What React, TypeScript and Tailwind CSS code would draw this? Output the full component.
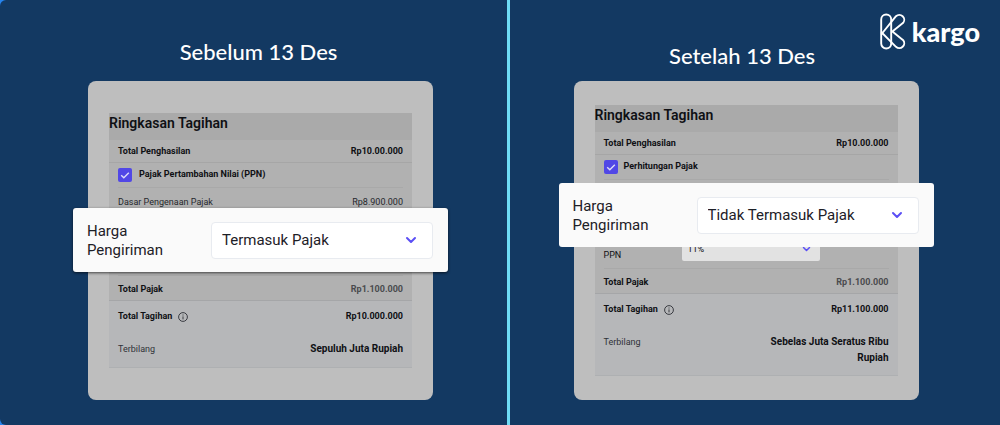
import React from "react";

function Chevron({ className }: { className: string }) {
  return (
    <svg viewBox="0 0 12 8" fill="none" stroke="#5b4ff5" strokeWidth="2" strokeLinecap="round" strokeLinejoin="round" className={className} aria-hidden="true">
      <path d="M2 2l4 4 4-4" />
    </svg>
  );
}

function InfoIcon() {
  return (
    <svg viewBox="0 0 10 10" fill="none" stroke="#1c1e24" strokeWidth="0.8" className="size-[10px]" aria-hidden="true">
      <circle cx="5" cy="5" r="4.4" />
      <path d="M5 4.4v3M5 2.5v1" />
    </svg>
  );
}

function KargoLogo() {
  return (
    <a href="#" aria-label="kargo" className="absolute top-[13px] right-5 flex items-center gap-[6px] font-[Lato,sans-serif] text-white">
      <svg viewBox="0 0 26 37" fill="none" stroke="currentColor" strokeWidth="1.9" strokeLinejoin="round" className="h-[37px] w-[26px]" aria-hidden="true">
        <rect x="1.2" y="1.5" width="10" height="34" rx="5" />
        <path d="M1.2 21.5 L16 3.2 A4.9 4.9 0 0 1 23.2 9.8 L12.4 18.5 L23.2 27.2 A4.9 4.9 0 0 1 16 33.8 L1.2 19" />
      </svg>
      <span className="text-[27px] leading-9 font-black">kargo</span>
    </a>
  );
}

function Row({ label, value, className, valueClass = "" }: { label: React.ReactNode; value: string; className: string; valueClass?: string }) {
  return (
    <div className={`flex justify-between ${className}`}>
      <dt className="flex items-center gap-[6px]">{label}</dt>
      <dd className={`text-right ${valueClass}`}>{value}</dd>
    </div>
  );
}

function TaxCheckbox({ id, label, className }: { id: string; label: string; className: string }) {
  return (
    <div className={`flex items-center font-bold ${className}`}>
      <span className="grid">
        <input id={id} type="checkbox" defaultChecked className="col-start-1 row-start-1 size-[14px] appearance-none rounded-xs bg-[#5147e6]" />
        <svg viewBox="0 0 14 14" fill="none" stroke="#dedcf8" strokeWidth="1.4" className="pointer-events-none col-start-1 row-start-1 size-[14px]" aria-hidden="true">
          <path d="M3.2 7.2l2.6 2.5 5-5" />
        </svg>
      </span>
      <label htmlFor={id}>{label}</label>
    </div>
  );
}

function PriceCallout({ id, value, options, className }: { id: string; value: string; options: string[]; className: string }) {
  return (
    <div className={`relative z-10 flex h-16 items-center justify-between rounded-[3px] bg-[#fafafa] pr-[15px] pl-[14px] text-[15px] text-[#1d2027] ${className}`}>
      <label htmlFor={id} className="w-[90px] pt-px leading-[19px]">
        Harga Pengiriman
      </label>
      <div className="grid w-[222px] items-center">
        <select id={id} defaultValue={value} className="col-start-1 row-start-1 h-[37px] w-full appearance-none rounded-sm border border-[#e8ebf0] bg-white px-[10px]">
          {options.map((option) => (
            <option key={option}>{option}</option>
          ))}
        </select>
        <Chevron className="pointer-events-none col-start-1 row-start-1 mr-4 h-[8px] w-3 justify-self-end" />
      </div>
    </div>
  );
}

function Totals({ total, words, className }: { total: string; words: string; className: string }) {
  return (
    <>
      <Row label="Total Pajak" value="Rp1.100.000" className="mx-[9px] h-[25px] items-center border-t border-[#a9a9a9] pt-[3px] font-bold" valueClass="text-[#4a4b4e]" />
      <div className={`border-y border-t-[#a5a6a8] border-b-[#aeb0b2] bg-[#b6b7b9] px-[9px] ${className}`}>
        <Row
          label={
            <>
              Total Tagihan <InfoIcon />
            </>
          }
          value={total}
          className="h-[31px] items-center pt-px font-bold"
        />
        <Row
          label={<span className="text-[#303238]">Terbilang</span>}
          value={words}
          className="items-start pt-[9px] leading-4"
          valueClass="w-[130px] text-[10px] font-bold"
        />
      </div>
    </>
  );
}

function Sheet({ children, className }: { children: React.ReactNode; className: string }) {
  return (
    <section className={`min-h-[319px] w-[345px] rounded-lg bg-[#bebebe] px-[21px] text-[9px] text-[#0f1014] ${className}`}>
      <div className="bg-[#b1b1b1]">
        <h3 className="h-[27px] bg-[#aaaaaa] text-sm leading-[21px] font-semibold">Ringkasan Tagihan</h3>
        <dl>
          <Row label="Total Penghasilan" value="Rp10.00.000" className="h-[23px] items-center border-b border-[#a6a6a6] px-[9px] pt-0.5 font-bold" />
          {children}
        </dl>
      </div>
    </section>
  );
}

function BeforePanel() {
  return (
    <section className="flex flex-col items-center pl-[14px]">
      <h2 className="pt-[38px] pr-1 font-[Lato,sans-serif] text-[22px] leading-7 font-medium text-white">Sebelum 13 Des</h2>
      <Sheet className="mt-[15px] pt-8">
        <TaxCheckbox id="ppn-before" label="Pajak Pertambahan Nilai (PPN)" className="mx-[9px] h-[25px] gap-[7px] border-b border-[#a9a9a9]" />
        <Row label="Dasar Pengenaan Pajak" value="Rp8.900.000" className="h-5 items-end px-[9px] leading-3 text-[#26282d]" />
        <PriceCallout id="price-before" value="Termasuk Pajak" options={["Termasuk Pajak", "Tidak Termasuk Pajak"]} className="-mx-9 mb-[3px] shadow-[0_1px_3px_rgba(0,0,0,0.65)]" />
        <Totals total="Rp10.000.000" words="Sepuluh Juta Rupiah" className="h-[68px]" />
      </Sheet>
    </section>
  );
}

function AfterPanel() {
  return (
    <section className="flex flex-col items-center pr-[18px]">
      <h2 className="pt-[42px] pr-2 font-[Lato,sans-serif] text-[22px] leading-7 font-medium text-white">Setelah 13 Des</h2>
      <Sheet className="mt-[11px] pt-6">
        <TaxCheckbox id="ppn-after" label="Perhitungan Pajak" className="mx-[9px] h-[25px] gap-[6px] border-b border-[#a9a9a9]" />
        <PriceCallout id="price-after" value="Tidak Termasuk Pajak" options={["Termasuk Pajak", "Tidak Termasuk Pajak"]} className="-mx-9 mt-[3px] -mb-[10px]" />
        <div className="mx-[9px] flex h-[31px] items-start justify-between pr-[69px]">
          <label htmlFor="rate" className="w-[60px] pt-0.5 leading-[11px]">
            Persentase PPN
          </label>
          <div className="grid w-[138px] items-center">
            <select id="rate" defaultValue="11%" className="col-start-1 row-start-1 h-6 w-full appearance-none rounded-xs bg-[#e2e2e2] px-[6px] pt-0.5">
              <option>11%</option>
              <option>12%</option>
            </select>
            <Chevron className="pointer-events-none col-start-1 row-start-1 mr-[9px] h-[6px] w-[9px] justify-self-end" />
          </div>
        </div>
        <Totals total="Rp11.100.000" words="Sebelas Juta Seratus Ribu Rupiah" className="h-[83px]" />
      </Sheet>
    </section>
  );
}

export default function App() {
  return (
    <div className="min-h-screen bg-[#2684ee] font-[Roboto,sans-serif]">
      <main className="relative grid min-h-screen grid-cols-[507fr_3px_490fr] rounded-l-md bg-[#133962]">
        <BeforePanel />
        <div className="bg-[#6fdcf5]" />
        <AfterPanel />
        <KargoLogo />
      </main>
    </div>
  );
}
